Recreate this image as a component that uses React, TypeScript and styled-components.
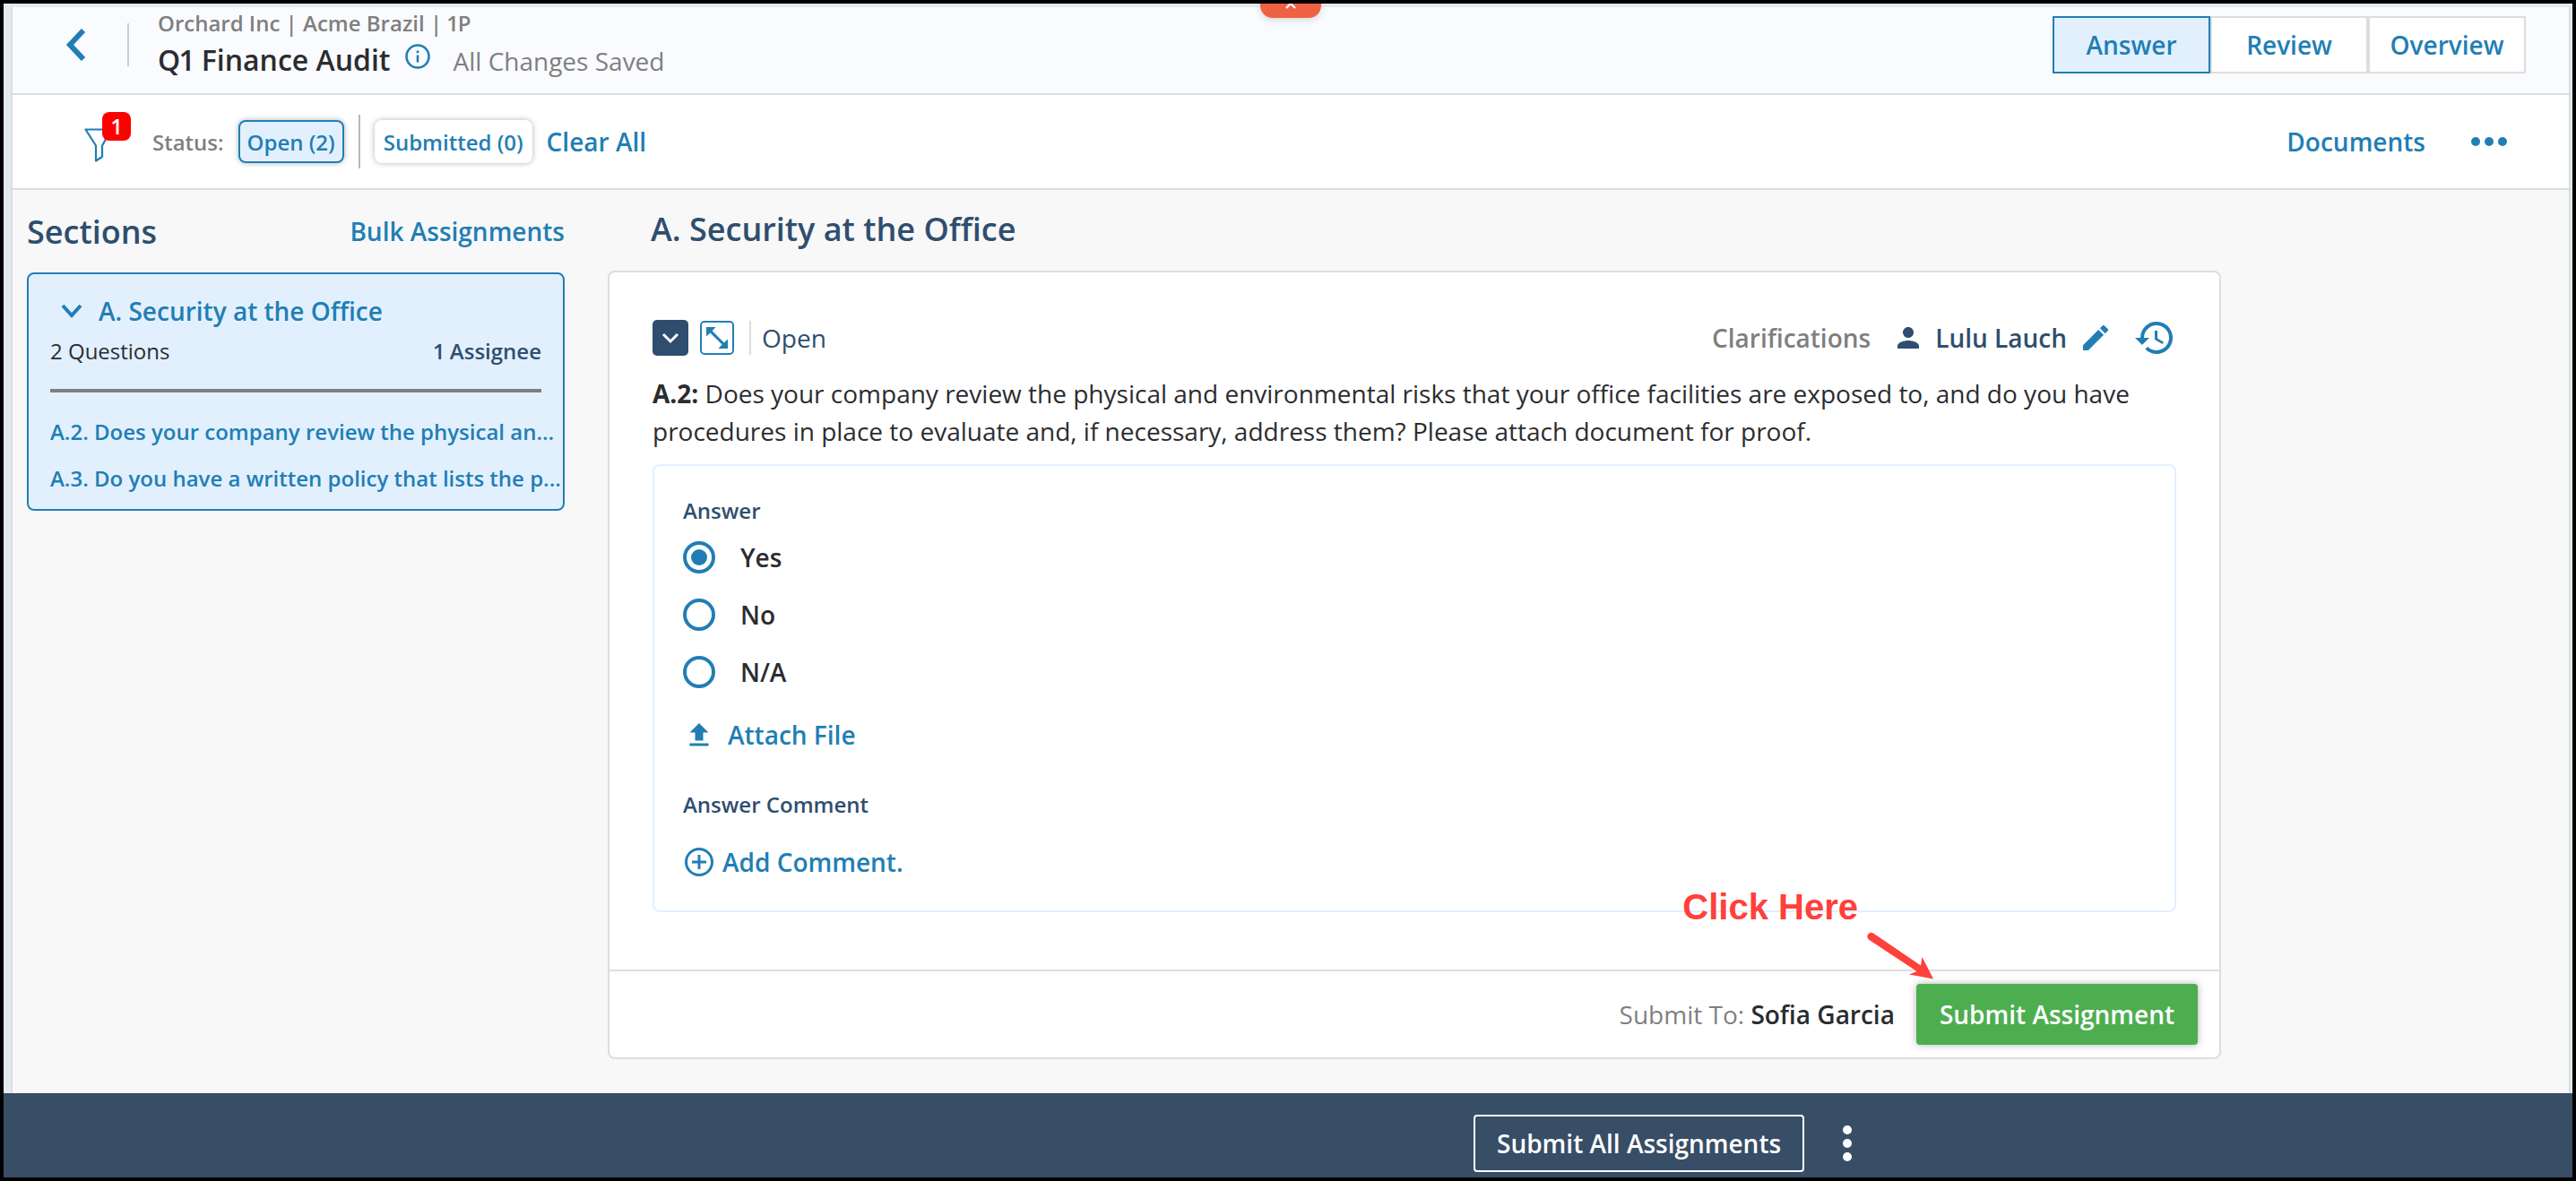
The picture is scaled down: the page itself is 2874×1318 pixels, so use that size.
import React, { useState } from "react";
import styled, { createGlobalStyle, css } from "styled-components";

const color = {
  blue: "#217eb5",
  navy: "#2f4e6f",
  ink: "#2b2c30",
  grey: "#7f7f7f",
  line: "#dddddd",
  frameLine: "#d5dfe0",
  tint: "#e2f0fe",
};

const Global = createGlobalStyle`
  *, *::before, *::after { box-sizing: border-box; }
  body { margin: 0; font-family: "Open Sans", "Noto Sans", sans-serif; color: ${color.ink}; }
  button { font-family: inherit; margin: 0; padding: 0; border: 0; background: none; cursor: pointer; }
  h1, h2, p { margin: 0; }
  a { text-decoration: none; }
  svg { display: block; flex: none; }
`;

const Frame = styled.div`
  min-height: 100vh;
  display: flex;
  flex-direction: column;
  border: 4px solid #000;
`;

const Shell = styled.div`
  position: relative;
  flex: 1;
  display: flex;
  padding: 4px 2px 0 8px;
  background: #e5ebec;
`;

const Page = styled.div`
  flex: 1;
  min-width: 0;
  border: 0 solid ${color.frameLine};
  border-width: 0 2px;
  background: #f8f8f8;
`;

const PullTab = styled.button`
  position: absolute;
  top: 0;
  left: calc(50% - 31px);
  width: 68px;
  height: 16px;
  display: flex;
  justify-content: center;
  background: #ee6243;
  border-radius: 0 0 14px 14px;
  box-shadow: 0 2px 8px rgba(0, 0, 0, 0.16);
`;

const Header = styled.header`
  display: flex;
  align-items: center;
  height: 98px;
  padding: 0 48px 12px 58px;
  background: #fafbfe;
  border-bottom: 2px solid ${color.frameLine};
`;

const IconButton = styled.button`
  display: flex;
  align-items: center;
  color: ${color.blue};
`;

const Rule = styled.span<{ $height: number; $tone?: string }>`
  flex: none;
  width: 2px;
  height: ${(p) => p.$height}px;
  background: ${(p) => p.$tone ?? "#cccccc"};
`;

const BackArea = styled.div`
  display: flex;
  align-items: center;
  gap: 46px;
  margin-right: 32px;
`;

const Crumb = styled.p`
  font-size: 24px;
  line-height: 34px;
  font-weight: 600;
  font-variant-numeric: proportional-nums;
  color: ${color.grey};
`;

const TitleRow = styled.div`
  display: flex;
  align-items: baseline;
  line-height: 48px;
`;

const Title = styled.h1`
  font-size: 32px;
  font-weight: 600;
  font-variant-numeric: proportional-nums;
`;

const InfoButton = styled(IconButton)`
  align-self: flex-start;
  margin: 6px 26px 0 16px;
`;

const SaveState = styled.span`
  font-size: 28px;
  color: ${color.grey};
`;

const ModeSwitch = styled.nav`
  display: flex;
  margin-left: auto;
`;

const ModeButton = styled.button<{ $active?: boolean }>`
  width: 176px;
  height: 64px;
  border: 2px solid ${(p) => (p.$active ? color.blue : color.line)};
  background: ${(p) => (p.$active ? color.tint : "#fff")};
  color: ${color.blue};
  font-size: 28px;
  font-weight: 600;
`;

const Toolbar = styled.div`
  display: flex;
  align-items: center;
  height: 106px;
  padding: 0 68px 0 80px;
  background: #fff;
  border-bottom: 2px solid ${color.line};
`;

const FilterButton = styled(IconButton)`
  position: relative;
  padding: 8px 44px 0 0;
`;

const Badge = styled.span`
  position: absolute;
  left: 20px;
  top: -10px;
  width: 32px;
  height: 32px;
  border-radius: 8px;
  background: #ff0000;
  color: #fff;
  font-size: 24px;
  line-height: 32px;
  font-weight: 600;
  text-align: center;
`;

const StatusLabel = styled.span`
  margin-right: 16px;
  font-size: 24px;
  font-weight: 600;
  color: ${color.grey};
`;

const Chip = styled.button<{ $active?: boolean }>`
  height: 48px;
  padding: 0 8px;
  border: 2px solid ${(p) => (p.$active ? color.blue : "#fff")};
  border-radius: 8px;
  background: ${(p) => (p.$active ? color.tint : "#fff")};
  box-shadow: 0 0 6px rgba(0, 0, 0, 0.3);
  color: ${color.blue};
  font-size: 24px;
  font-weight: 600;
`;

const ChipGroup = styled.div`
  display: flex;
  align-items: center;
  gap: 16px;
`;

const TextButton = styled.button`
  display: flex;
  align-items: center;
  color: ${color.blue};
  font-size: 28px;
  line-height: 40px;
  font-weight: 600;
`;

const ToolbarEnd = styled.div`
  display: flex;
  align-items: center;
  gap: 50px;
  margin-left: auto;
`;

const Columns = styled.div`
  display: flex;
  align-items: flex-start;
  gap: 48px;
  padding: 0 16px 38px;
`;

const Sidebar = styled.aside`
  flex: 0 0 600px;
`;

const SidebarHead = styled.div`
  display: flex;
  align-items: center;
  justify-content: space-between;
  height: 92px;
`;

const Heading = styled.h2`
  font-size: 36px;
  font-weight: 600;
  color: ${color.navy};
`;

const SectionPanel = styled.section`
  padding: 18px 0 8px 24px;
  border: 2px solid ${color.blue};
  border-radius: 8px;
  background: ${color.tint};
`;

const SectionToggle = styled(TextButton)`
  gap: 18px;
  height: 46px;
  padding-left: 12px;
`;

const SectionMeta = styled.div`
  display: flex;
  justify-content: space-between;
  margin-right: 24px;
  padding-bottom: 20px;
  border-bottom: 4px solid #808080;
  font-size: 24px;
  line-height: 44px;
`;

const Assignees = styled.span`
  font-weight: 600;
  font-variant-numeric: proportional-nums;
  color: ${color.navy};
`;

const QuestionList = styled.nav`
  display: flex;
  flex-direction: column;
  margin-top: 18px;
`;

const QuestionLink = styled.a`
  font-size: 24px;
  line-height: 52px;
  font-weight: 600;
  color: ${color.blue};
  white-space: nowrap;
  overflow: hidden;
`;

const Main = styled.main`
  position: relative;
  flex: 0 1 1800px;
  min-width: 0;
`;

const MainHeading = styled(Heading)`
  margin-bottom: 2px;
  padding-left: 48px;
  line-height: 88px;
`;

const Card = styled.article`
  border: 2px solid ${color.line};
  border-radius: 8px;
  background: #fff;
`;

const CardBody = styled.div`
  padding: 52px 48px 64px;
`;

const CardHead = styled.div`
  display: flex;
  align-items: center;
  height: 42px;
  margin-bottom: 20px;
  font-size: 28px;
`;

const squareButton = css`
  display: flex;
  align-items: center;
  justify-content: center;
  border-radius: 5px;
`;

const CollapseButton = styled.button`
  ${squareButton}
  width: 40px;
  height: 40px;
  background: ${color.navy};
  color: #fff;
`;

const ExpandButton = styled.button`
  ${squareButton}
  width: 38px;
  height: 38px;
  margin: 0 17px 0 13px;
  border: 2px solid ${color.blue};
  color: ${color.blue};
`;

const QuestionState = styled.span`
  margin-left: 12px;
  color: ${color.navy};
`;

const CardTools = styled.div`
  display: flex;
  align-items: center;
  margin-left: auto;
  padding-right: 4px;
`;

const Clarifications = styled.button`
  margin-right: 30px;
  color: ${color.grey};
  font-size: 28px;
  font-weight: 600;
`;

const Assignee = styled.span`
  display: flex;
  align-items: center;
  gap: 18px;
  margin-right: 18px;
  color: ${color.navy};
  font-weight: 600;
`;

const Tools = styled.div`
  display: flex;
  align-items: center;
  gap: 30px;
`;

const Question = styled.p`
  font-size: 28px;
  line-height: 42px;
`;

const AnswerBox = styled.div`
  margin-top: 16px;
  padding: 34px 32px;
  border: 2px solid ${color.tint};
  border-radius: 8px;
`;

const FieldSet = styled.fieldset`
  margin: 0;
  padding: 0;
  border: 0;
`;

const labelText = css`
  display: block;
  padding: 0;
  font-size: 24px;
  line-height: 32px;
  font-weight: 600;
  color: ${color.navy};
`;

const Legend = styled.legend`
  ${labelText}
  margin-bottom: 4px;
`;

const FieldTitle = styled.p`
  ${labelText}
  margin: 42px 0 28px;
`;

const Choice = styled.label`
  display: flex;
  align-items: center;
  gap: 28px;
  height: 64px;
  font-size: 28px;
  font-weight: 600;
  cursor: pointer;
`;

const Radio = styled.input`
  appearance: none;
  display: grid;
  place-items: center;
  width: 36px;
  height: 36px;
  margin: 0;
  border: 4px solid ${color.blue};
  border-radius: 50%;
  background: #fff;

  &:checked::before {
    content: "";
    width: 18px;
    height: 18px;
    border-radius: 50%;
    background: ${color.blue};
  }
`;

const AttachButton = styled(TextButton)`
  gap: 14px;
  margin-top: 18px;
`;

const CommentButton = styled(TextButton)`
  gap: 8px;
`;

const CardFoot = styled.footer`
  display: flex;
  align-items: center;
  justify-content: flex-end;
  gap: 24px;
  height: 98px;
  padding-right: 24px;
  border-top: 2px solid ${color.line};
  font-size: 28px;
`;

const SubmitTo = styled.span`
  color: ${color.grey};

  strong {
    font-weight: 600;
    color: ${color.ink};
  }
`;

const SubmitButton = styled.button`
  height: 68px;
  padding: 0 26px;
  border-radius: 4px;
  background: #4dae50;
  box-shadow: 0 0 8px rgba(0, 0, 0, 0.3);
  color: #fff;
  font-size: 28px;
  font-weight: 600;
`;

const Callout = styled.div`
  position: absolute;
  right: 321px;
  bottom: 86px;
  display: flex;
  color: #ff403b;
  font: bold 40px/48px "Liberation Sans", Arial, sans-serif;
  pointer-events: none;

  svg {
    margin: 52px 0 0 10px;
  }
`;

const ActionBar = styled.footer`
  display: flex;
  align-items: center;
  gap: 42px;
  padding: 24px 0 6px calc(50% + 207px);
  background: #384d66;
`;

const SubmitAllButton = styled.button`
  height: 64px;
  padding: 0 24px;
  border: 2px solid #fff;
  border-radius: 4px;
  color: #fff;
  font-size: 28px;
  font-weight: 600;
`;

const MoreButton = styled.button`
  color: #fff;
`;

const Chevron = ({ width, height, stroke }: { width: number; height: number; stroke: number }) => (
  <svg width={width} height={height} viewBox={`0 0 ${width} ${height}`} fill="none" stroke="currentColor" strokeWidth={stroke}>
    <path d={`M2 2L${width / 2} ${height - 3}L${width - 2} 2`} />
  </svg>
);

const questions = [
  "A.2. Does your company review the physical an...",
  "A.3. Do you have a written policy that lists the p...",
];

export default function App() {
  const [answer, setAnswer] = useState("Yes");

  return (
    <>
      <Global />
      <Frame>
        <Shell>
          <Page>
            <Header>
              <BackArea>
                <IconButton aria-label="Back">
                  <svg width="24" height="36" viewBox="0 0 24 36" fill="none" stroke="currentColor" strokeWidth="6">
                    <path d="M21 2L6 18L21 34" />
                  </svg>
                </IconButton>
                <Rule $height={48} />
              </BackArea>
              <div>
                <Crumb>Orchard Inc | Acme Brazil | 1P</Crumb>
                <TitleRow>
                  <Title>Q1 Finance Audit</Title>
                  <InfoButton aria-label="Audit information">
                    <svg width="28" height="28" viewBox="0 0 28 28" fill="none" stroke="currentColor" strokeWidth="2.6">
                      <circle cx="14" cy="14" r="12.5" />
                      <path d="M14 12.4V20.5M14 7.5V10.2" />
                    </svg>
                  </InfoButton>
                  <SaveState>All Changes Saved</SaveState>
                </TitleRow>
              </div>
              <ModeSwitch>
                <ModeButton $active>Answer</ModeButton>
                <ModeButton>Review</ModeButton>
                <ModeButton>Overview</ModeButton>
              </ModeSwitch>
            </Header>

            <Toolbar>
              <FilterButton aria-label="Filters, 1 active">
                <svg width="32" height="38" viewBox="0 0 32 38" fill="none" stroke="currentColor" strokeWidth="2.2" strokeLinejoin="round">
                  <path d="M1.5 1.5H30L20 19.5V32L13 36.5V19.5Z" />
                </svg>
                <Badge>1</Badge>
              </FilterButton>
              <StatusLabel>Status:</StatusLabel>
              <ChipGroup>
                <Chip $active>Open (2)</Chip>
                <Rule $height={60} $tone="#b8b8b8" />
                <Chip>Submitted (0)</Chip>
                <TextButton>Clear All</TextButton>
              </ChipGroup>
              <ToolbarEnd>
                <TextButton>Documents</TextButton>
                <IconButton aria-label="More options">
                  <svg width="42" height="12" viewBox="0 0 42 12" fill="currentColor">
                    <circle cx="6" cy="6" r="5" />
                    <circle cx="21" cy="6" r="5" />
                    <circle cx="36" cy="6" r="5" />
                  </svg>
                </IconButton>
              </ToolbarEnd>
            </Toolbar>

            <Columns>
              <Sidebar>
                <SidebarHead>
                  <Heading>Sections</Heading>
                  <TextButton>Bulk Assignments</TextButton>
                </SidebarHead>
                <SectionPanel>
                  <SectionToggle>
                    <Chevron width={24} height={16} stroke={4} />
                    A. Security at the Office
                  </SectionToggle>
                  <SectionMeta>
                    <span>2 Questions</span>
                    <Assignees>1 Assignee</Assignees>
                  </SectionMeta>
                  <QuestionList>
                    {questions.map((q) => (
                      <QuestionLink key={q} href="#question">
                        {q}
                      </QuestionLink>
                    ))}
                  </QuestionList>
                </SectionPanel>
              </Sidebar>

              <Main>
                <MainHeading>A. Security at the Office</MainHeading>
                <Card>
                  <CardBody>
                    <CardHead>
                      <CollapseButton aria-label="Collapse question">
                        <Chevron width={20} height={13} stroke={3} />
                      </CollapseButton>
                      <ExpandButton aria-label="Expand question">
                        <svg width="26" height="26" viewBox="0 0 26 26" fill="currentColor">
                          <path d="M1 1H11.5L7.6 5.2L20.8 18.4L25 14.5V25H14.5L18.6 20.6L5.4 7.4L1 11.5Z" />
                        </svg>
                      </ExpandButton>
                      <Rule $height={38} $tone={color.line} />
                      <QuestionState>Open</QuestionState>
                      <CardTools>
                        <Clarifications>Clarifications</Clarifications>
                        <Assignee>
                          <svg width="24" height="24" viewBox="4 4 16 16" fill="currentColor">
                            <path d="M12 12c2.21 0 4-1.79 4-4s-1.79-4-4-4-4 1.79-4 4 1.79 4 4 4zm0 2c-2.67 0-8 1.34-8 4v2h16v-2c0-2.66-5.33-4-8-4z" />
                          </svg>
                          Lulu Lauch
                        </Assignee>
                        <Tools>
                          <IconButton aria-label="Edit assignee">
                            <svg width="28" height="28" viewBox="3 3 18 18" fill="currentColor">
                              <path d="M3 17.25V21h3.75L17.81 9.94l-3.75-3.75L3 17.25zM20.71 7.04a1 1 0 0 0 0-1.41l-2.34-2.34a1 1 0 0 0-1.41 0l-1.83 1.83 3.75 3.75 1.83-1.83z" />
                            </svg>
                          </IconButton>
                          <IconButton aria-label="History">
                            <svg width="42" height="36" viewBox="1 3 21 18" fill="currentColor">
                              <path d="M13 3a9 9 0 0 0-9 9H1l3.89 3.89.07.14L9 12H6a7 7 0 1 1 2.06 4.94l-1.42 1.42A9 9 0 1 0 13 3zm-1 5v5l4.28 2.54.72-1.21-3.5-2.08V8H12z" />
                            </svg>
                          </IconButton>
                        </Tools>
                      </CardTools>
                    </CardHead>
                    <Question>
                      <b>A.2:</b> Does your company review the physical and environmental risks that your office facilities are
                      exposed to, and do you have procedures in place to evaluate and, if necessary, address them? Please attach
                      document for proof.
                    </Question>
                    <AnswerBox>
                      <FieldSet>
                        <Legend>Answer</Legend>
                        {["Yes", "No", "N/A"].map((option) => (
                          <Choice key={option}>
                            <Radio type="radio" name="answer" checked={answer === option} onChange={() => setAnswer(option)} />
                            {option}
                          </Choice>
                        ))}
                      </FieldSet>
                      <AttachButton>
                        <svg width="36" height="26" viewBox="0 0 36 26" fill="currentColor">
                          <path d="M18 0L28.5 10.5H22.5V19.5H13.5V10.5H7.5ZM7.5 22.5H28.5V25.5H7.5Z" />
                        </svg>
                        Attach File
                      </AttachButton>
                      <FieldTitle>Answer Comment</FieldTitle>
                      <CommentButton>
                        <svg width="36" height="36" viewBox="0 0 36 36" fill="none" stroke="currentColor" strokeWidth="3">
                          <circle cx="18" cy="18" r="14.5" />
                          <path d="M18 10V26M10 18H26" />
                        </svg>
                        Add Comment.
                      </CommentButton>
                    </AnswerBox>
                  </CardBody>
                  <CardFoot>
                    <SubmitTo>
                      Submit To: <strong>Sofia Garcia</strong>
                    </SubmitTo>
                    <SubmitButton>Submit Assignment</SubmitButton>
                  </CardFoot>
                </Card>
                <Callout>
                  Click Here
                  <svg width="74" height="56" viewBox="0 0 74 56" fill="currentColor">
                    <path d="M7 1.5L60 37.5L61.5 28L74 52.5L47 47.5L55.5 44L2.5 9A4 4 0 0 1 7 1.5Z" />
                  </svg>
                </Callout>
              </Main>
            </Columns>
          </Page>
          <PullTab aria-label="Hide banner">
            <svg width="14" height="8" viewBox="0 0 14 8" fill="none" stroke="#fff" strokeWidth="2.4">
              <path d="M2 5L7 0L12 5" />
            </svg>
          </PullTab>
        </Shell>
        <ActionBar>
          <SubmitAllButton>Submit All Assignments</SubmitAllButton>
          <MoreButton aria-label="More actions">
            <svg width="12" height="42" viewBox="0 0 12 42" fill="currentColor">
              <circle cx="6" cy="6" r="5" />
              <circle cx="6" cy="21" r="5" />
              <circle cx="6" cy="36" r="5" />
            </svg>
          </MoreButton>
        </ActionBar>
      </Frame>
    </>
  );
}
